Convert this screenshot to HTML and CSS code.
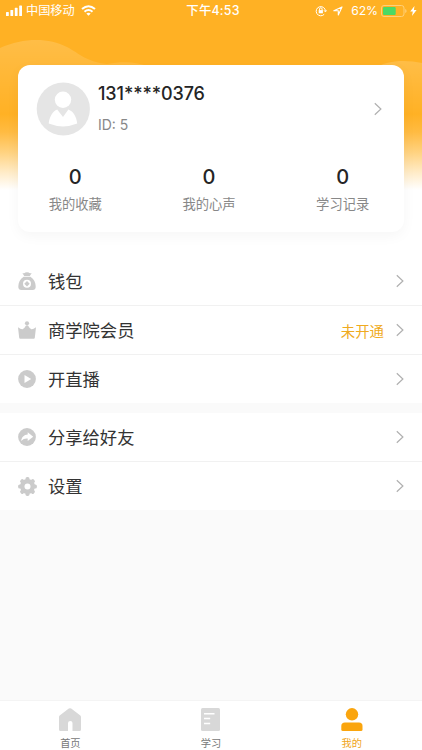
FILE: index.html
```html
<!DOCTYPE html>
<html lang="zh-CN">
<head>
<meta charset="utf-8">
<meta name="viewport" content="width=device-width, initial-scale=1">
<title>我的</title>
<link rel="stylesheet" href="styles.css">
</head>
<body>
<svg class="symbols" width="0" height="0" aria-hidden="true">
  <symbol id="chevron" viewBox="0 0 8 14"><path d="M.8 1.2 6.9 7 .8 12.8" fill="none" stroke="currentColor" stroke-width="1.2"/></symbol>
</svg>
<div class="app">
  <svg class="backdrop" viewBox="0 0 422 200" preserveAspectRatio="none" aria-hidden="true">
    <defs>
      <linearGradient id="base" x1="0" y1="0" x2="0" y2="1">
        <stop offset="0" stop-color="#ffb124"/><stop offset=".57" stop-color="#ffb124"/>
        <stop offset=".66" stop-color="#ffbb42"/><stop offset=".76" stop-color="#ffd27f"/>
        <stop offset=".86" stop-color="#ffebc6"/><stop offset=".95" stop-color="#fff"/>
      </linearGradient>
      <linearGradient id="wave" x1="0" y1="0" x2="0" y2="1">
        <stop offset="0" stop-color="#fff" stop-opacity=".16"/><stop offset="1" stop-color="#fff" stop-opacity="0"/>
      </linearGradient>
    </defs>
    <path d="M0 0H422V200H0Z" fill="url(#base)"/>
    <path d="M0 48C25 37 49 38 67 47C80 54 87 62 107 64C124 61 137 62 150 67V115H0Z" fill="url(#wave)"/>
    <path d="M373 69C389 59 407 60 422 63V115H373Z" fill="url(#wave)"/>
  </svg>
  <header class="status">
    <div class="status-side">
      <svg width="17" height="11" viewBox="0 0 17 11" fill="#fff"><rect y="7" width="2.8" height="4" rx=".6"/><rect x="4.4" y="5" width="2.8" height="6" rx=".6"/><rect x="8.8" y="2.8" width="2.8" height="8.2" rx=".6"/><rect x="13.2" y=".4" width="2.8" height="10.6" rx=".6"/></svg>
      <span class="carrier">中国移动</span>
      <svg class="wifi" width="15" height="11" viewBox="0 0 15 11" fill="none" stroke="#fff" stroke-width="2"><path d="M1 4.1Q7.5-1.7 14 4.1M3.5 6.8Q7.5 3.3 11.5 6.8"/><path d="M5.3 8.6Q7.5 6.9 9.7 8.6L7.5 10.8Z" fill="#fff" stroke="none"/></svg>
    </div>
    <time class="clock">下午4:53</time>
    <div class="status-side status-right">
      <svg width="12" height="12" viewBox="0 0 12 12" fill="none" stroke="#fff" stroke-width="1"><path d="M9.2 9.3A4.6 4.6 0 1 1 10.4 6.2M9 5.4l1.4 1.5 1.3-1.5"/><path d="M4.5 5.2V4.1a1.3 1.3 0 0 1 2.6 0v1.1"/><path d="M3.7 5.1h4.2v3.2H3.7z" fill="#fff" stroke="none"/></svg>
      <svg class="locate" width="10" height="10" viewBox="0 0 10 10" fill="none" stroke="#fff" stroke-width="1.1" stroke-linejoin="round"><path d="M.8 4.8 9 .9 5.3 9V4.8Z"/></svg>
      <span class="percent">62%</span>
      <svg width="26" height="12" viewBox="0 0 26 12"><rect x=".5" y=".5" width="22.5" height="11" rx="2.5" fill="none" stroke="#ffd078"/><rect x="2" y="2" width="12.7" height="8" rx="1" fill="#4cd964"/><path d="M24.2 4v4q1.4-.6 1.4-2t-1.4-2Z" fill="#ffd078"/></svg>
      <svg class="bolt" width="7" height="10" viewBox="0 0 7 10"><path d="M4.5 0 .2 5.6h2.6L2 10l4.6-5.9H3.9Z" fill="#fff"/></svg>
    </div>
  </header>

  <section class="card">
    <div class="profile">
      <svg class="avatar" width="54" height="54" viewBox="0 0 54 54"><circle cx="27.3" cy="27" r="26.6" fill="#e5e5e5"/><circle cx="27" cy="17.8" r="8.2" fill="#fff"/><path d="M21.2 27.6 27 35l5.4-7.4C37.5 29.5 40.5 35 41.2 41.6Q34.5 44.4 27 44.4T12.7 41.6C13.5 35 16.5 29.4 21.2 27.6Z" fill="#fff"/></svg>
      <div class="identity"><h1>131****0376</h1><p>ID: 5</p></div>
      <svg class="chevron" width="8" height="14"><use href="#chevron"/></svg>
    </div>
    <div class="stats">
      <div class="stat"><strong>0</strong><span>我的收藏</span></div>
      <div class="stat"><strong>0</strong><span>我的心声</span></div>
      <div class="stat"><strong>0</strong><span>学习记录</span></div>
    </div>
  </section>

  <main class="menus">
    <section class="menu">
      <div class="row">
        <svg class="icon" viewBox="0 0 18 18"><path d="M4.4.9Q6.5 1.7 7.3.6 9-.2 10.8.6q.8 1.1 2.9.3L11.8 4H6.2Z" fill="#cbcbcb"/><path d="M5.6 4.7h6.8C16 7 17.7 10.5 17.7 15q-.2 2.9-3 2.9H3.3Q.5 17.9.3 15C.3 10.5 2 7 5.6 4.7Z" fill="#cbcbcb"/><circle cx="9" cy="11.8" r="4" fill="#fff"/><path d="M9 9.1 11.7 11.8 9 14.5 6.3 11.8Z" fill="#cbcbcb"/></svg>
        <span class="label">钱包</span><svg class="chevron" width="8" height="14"><use href="#chevron"/></svg>
      </div>
      <div class="row">
        <svg class="icon" viewBox="0 0 18 18"><path d="M0 6.2Q3 8.6 4.6 8.2 6.5 7.6 8 4.6H10q1.5 3 3.4 3.6 1.6.4 4.6-2L16.8 16.8q-.1.9-1 .9H2.2q-.9 0-1-.9Z" fill="#cbcbcb"/><circle cx="9" cy="2.3" r="2.1" fill="#cbcbcb"/></svg>
        <span class="label">商学院会员</span><span class="note">未开通</span><svg class="chevron" width="8" height="14"><use href="#chevron"/></svg>
      </div>
      <div class="row">
        <svg class="icon" viewBox="0 0 18 18"><circle cx="9" cy="9" r="8.9" fill="#cbcbcb"/><path d="M6.5 5v8l6.7-4Z" fill="#fff"/></svg>
        <span class="label">开直播</span><svg class="chevron" width="8" height="14"><use href="#chevron"/></svg>
      </div>
    </section>
    <section class="menu">
      <div class="row">
        <svg class="icon" viewBox="0 0 18 18"><circle cx="9" cy="9" r="8.9" fill="#cbcbcb"/><path d="M9.7 4.3 15.2 8.7l-5.5 4.3v-2.5C7 10.3 5 11 3.2 13 3.5 9.4 6 6.8 9.7 6.6Z" fill="#fff"/></svg>
        <span class="label">分享给好友</span><svg class="chevron" width="8" height="14"><use href="#chevron"/></svg>
      </div>
      <div class="row">
        <svg class="icon gear" viewBox="-9.5 -9.5 19 19"><g fill="#cbcbcb"><circle r="7.5"/><rect x="-2" y="-9.4" width="4" height="18.8" rx="1.6"/><rect x="-2" y="-9.4" width="4" height="18.8" rx="1.6" transform="rotate(45)"/><rect x="-2" y="-9.4" width="4" height="18.8" rx="1.6" transform="rotate(90)"/><rect x="-2" y="-9.4" width="4" height="18.8" rx="1.6" transform="rotate(135)"/></g><circle r="3" fill="#fff"/></svg>
        <span class="label">设置</span><svg class="chevron" width="8" height="14"><use href="#chevron"/></svg>
      </div>
    </section>
  </main>

  <nav class="tabs">
    <a class="tab"><svg width="22" height="23" viewBox="0 0 22 23"><path d="M9.8.6q1.2-.9 2.4 0L21 7.2q1 .8 1 1.8V21.5Q22 23 20.5 23h-7V15q0-2-2.2-2T9 15v8H1.5Q0 23 0 21.5V9q0-1 1-1.8Z" fill="#d8d8d8"/></svg><span>首页</span></a>
    <a class="tab"><svg width="19" height="23" viewBox="0 0 19 23"><rect width="19" height="23" rx="1.5" fill="#d8d8d8"/><path d="M3 5.8h10.5M3 10.6h6.2M3 15.4h6.2" stroke="#fff" stroke-width="1.5"/></svg><span>学习</span></a>
    <a class="tab active"><svg width="22" height="23" viewBox="0 0 22 23" fill="#faa50e"><circle cx="11" cy="6.3" r="6.2"/><path d="M4 14.4H18Q21.5 14.4 21.5 18v3.5Q21.5 23 20 23H1.8Q.3 23 .3 21.5V18Q.3 14.4 4 14.4Z"/></svg><span>我的</span></a>
  </nav>
</div>
</body>
</html>
```
FILE: styles.css
```css
* { box-sizing: border-box; }
body {
  margin: 0;
  background: #fafafa;
  color: #333;
  font-family: Inter, "Noto Sans CJK SC", sans-serif;
}
svg { display: block; flex: none; }
.symbols { position: absolute; }
.app {
  position: relative;
  display: flex;
  flex-direction: column;
  height: 750px;
  overflow: hidden;
  background: linear-gradient(#fff 257px, #fafafa 257px);
}
.backdrop {
  position: absolute;
  top: 0;
  left: 0;
  width: 100%;
  height: 200px;
}
.status {
  position: relative;
  display: grid;
  grid-template-columns: 1fr auto 1fr;
  align-items: center;
  height: 21px;
  padding: 0 5px 0 6px;
  color: #fff;
  font-size: 12.2px;
  line-height: 20px;
}
.status-side { display: flex; align-items: center; }
.status-right { justify-content: flex-end; }
.carrier { margin: 0 6px 0 3px; }
.clock { padding-left: 3px; font-size: 12.4px; font-weight: 500; letter-spacing: .2px; }
.locate { margin: 0 8px 0 6px; }
.percent { margin-right: 3px; letter-spacing: -.1px; }
.bolt { margin-left: 3px; }
.card {
  position: relative;
  z-index: 1;
  height: 167px;
  margin: 44px 18px 0;
  padding: 17px 18px 0;
  background: #fff;
  border-radius: 12px;
  box-shadow: 0 4px 14px rgba(0, 0, 0, .04);
}
.profile { display: flex; align-items: center; height: 54px; }
.identity { flex: 1; margin-left: 8px; }
h1 {
  margin: -2px 0 10px;
  color: #252525;
  font-size: 18px;
  font-weight: 500;
  letter-spacing: -.1px;
  line-height: 24px;
}
.identity p { margin: 0; color: #888; font-size: 14px; line-height: 18px; }
.chevron { color: #b0b0b0; }
.profile .chevron { margin-right: 4px; }
.stats {
  display: grid;
  grid-template-columns: repeat(3, 133.7px);
  justify-content: center;
  margin: 28px 4px 0 0;
}
.stat { display: flex; flex-direction: column; align-items: center; }
.stat strong { color: #252525; font-size: 20px; font-weight: 450; line-height: 26px; }
.stat span { margin-top: 4px; color: #888; font-size: 13.3px; line-height: 20px; }
.menus { display: grid; gap: 10px; margin-top: 25px; }
.menu { background: #fff; }
.row { display: flex; align-items: center; height: 49px; padding: 1px 18px 0 17.5px; }
.row + .row { box-shadow: inset 0 1px #f1f1f1; }
.row:first-child { height: 48px; padding-top: 0; }
.icon { width: 18px; height: 18px; }
.gear { width: 19px; height: 19px; margin-right: -1px; }
.label { flex: 1; margin: 1px 0 0 12.5px; font-size: 17.3px; line-height: 26px; }
.note { margin-right: 12px; color: #efaa20; font-size: 14.4px; }
.tabs {
  position: relative;
  display: grid;
  grid-template-columns: repeat(3, 1fr);
  height: 50px;
  margin-top: auto;
  background: #fff;
  border-top: 1px solid #f4f4f4;
}
.tab {
  display: flex;
  flex-direction: column;
  align-items: center;
  padding-top: 7px;
  color: #777;
  font-size: 10.2px;
  line-height: 14px;
}
.tab span { margin-top: 5px; }
.active { color: #efa51b; }
```
